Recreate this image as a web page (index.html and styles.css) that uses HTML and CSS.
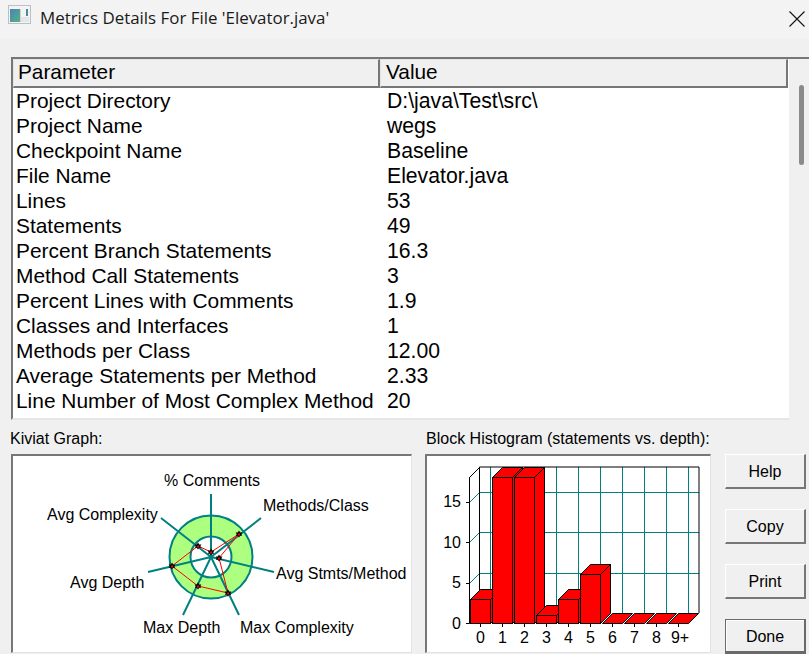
FILE: index.html
```html
<!DOCTYPE html>
<html lang="en">
<head>
<meta charset="utf-8">
<title>Metrics Details</title>
<link rel="stylesheet" href="styles.css">
</head>
<body>
<div class="window">
  <header class="titlebar">
    <svg class="app-icon" width="23" height="19" viewBox="0 0 23 19">
      <defs><linearGradient id="ig" x1="0" y1="0" x2="1" y2="1"><stop offset="0" stop-color="#4a84b8"/><stop offset="1" stop-color="#58b080"/></linearGradient></defs>
      <rect x="0.5" y="0.5" width="22" height="18" fill="#f2f3f4" stroke="#bcc0c4"/>
      <rect x="2" y="4" width="10" height="13" fill="url(#ig)"/>
      <rect x="12" y="4" width="1" height="13" fill="#cfd4d6"/>
      <rect x="18" y="4" width="2" height="7" fill="#4f8a92"/>
      <rect x="13" y="12" width="8" height="5" fill="#e4e6e6"/>
    </svg>
    <span class="title">Metrics Details For File 'Elevator.java'</span>
    <svg class="close" width="16" height="16" viewBox="0 0 16 16"><path d="M0.5 0.5L15.5 15.5M15.5 0.5L0.5 15.5" stroke="#111" stroke-width="1.1" fill="none"/></svg>
  </header>

  <main class="content">
    <section class="table-wrap">
      <div class="list">
        <div class="list-head">
          <div class="head-cell head-param">Parameter</div>
          <div class="head-cell head-value">Value</div>
        </div>
        <div class="rows">
          <div class="row"><span class="param">Project Directory</span><span class="val">D:\java\Test\src\</span></div>
          <div class="row"><span class="param">Project Name</span><span class="val">wegs</span></div>
          <div class="row"><span class="param">Checkpoint Name</span><span class="val">Baseline</span></div>
          <div class="row"><span class="param">File Name</span><span class="val">Elevator.java</span></div>
          <div class="row"><span class="param">Lines</span><span class="val">53</span></div>
          <div class="row"><span class="param">Statements</span><span class="val">49</span></div>
          <div class="row"><span class="param">Percent Branch Statements</span><span class="val">16.3</span></div>
          <div class="row"><span class="param">Method Call Statements</span><span class="val">3</span></div>
          <div class="row"><span class="param">Percent Lines with Comments</span><span class="val">1.9</span></div>
          <div class="row"><span class="param">Classes and Interfaces</span><span class="val">1</span></div>
          <div class="row"><span class="param">Methods per Class</span><span class="val">12.00</span></div>
          <div class="row"><span class="param">Average Statements per Method</span><span class="val">2.33</span></div>
          <div class="row"><span class="param">Line Number of Most Complex Method</span><span class="val">20</span></div>
        </div>
      </div>
      <div class="scrollbar"><div class="thumb"></div></div>
    </section>

    <section class="bottom">
      <div class="chart kiviat">
        <div class="chart-label">Kiviat Graph:</div>
        <div class="panel">
          <svg class="plot" width="398" height="196" viewBox="13 456 398 196">
            <g fill="none" stroke="#008080" stroke-width="2">
              <circle cx="211" cy="557" r="41.5" fill="#adff7f"/>
              <circle cx="211" cy="557" r="20.5" fill="#ffffff"/>
              <path d="M211 557L211 494M211 557L261 518M211 557L274 572M211 557L239 615M211 557L183 615M211 557L148 572M211 557L161 518"/>
            </g>
            <path class="poly" d="M211 552L239 534L219 558L228 593L198 586L172 566L198 546Z"/>
            <g>
              <use href="#star" x="211" y="552"/><use href="#star" x="239" y="534"/><use href="#star" x="219" y="558"/><use href="#star" x="228" y="593"/><use href="#star" x="198" y="586"/><use href="#star" x="172" y="566"/><use href="#star" x="198" y="546"/>
            </g>
            <defs><g id="star"><path d="M0 -3.5L3.2 1.8L-3.2 1.8Z M-3.4 -1.4L3.4 -1.4L0 3.4Z" fill="#000"/><rect x="-1" y="-0.5" width="2" height="2" fill="#f00"/></g></defs>
            <g class="lbl">
              <text x="164" y="486">% Comments</text>
              <text x="263" y="511">Methods/Class</text>
              <text x="47" y="520">Avg Complexity</text>
              <text x="276" y="579">Avg Stmts/Method</text>
              <text x="70" y="588">Avg Depth</text>
              <text x="143" y="633">Max Depth</text>
              <text x="240" y="633">Max Complexity</text>
            </g>
          </svg>
        </div>
      </div>

      <div class="chart hist">
        <div class="chart-label">Block Histogram (statements vs. depth):</div>
        <div class="panel">
          <svg class="plot" width="283" height="196" viewBox="427 456 283 196">
            <g fill="none">
              <path stroke="#008080" d="M490.5 467V613M512.5 467V613M534.5 467V613M556.5 467V613M578.5 467V613M600.5 467V613M622.5 467V613M644.5 467V613M666.5 467V613M688.5 467V613M479.5 492.5H699M479.5 532.5H699M479.5 573.5H699"/>
              <path stroke="#008080" class="diag" d="M469.5 502.5L479.5 492.5M469.5 542.5L479.5 532.5M469.5 583.5L479.5 573.5"/>
              <path stroke="#000" d="M479.5 613V467H699V613M469.5 477V623.5H480M469.5 502.5H466M469.5 542.5H466M469.5 583.5H466M469.5 623.5H466"/>
              <path stroke="#000" class="diag" d="M469.5 477.5L479.5 467.5"/>
              <path stroke="#000" d="M480.5 623V627M502.5 623V627M524.5 623V627M546.5 623V627M568.5 623V627M590.5 623V627M612.5 623V627M634.5 623V627M656.5 623V627M678.5 623V627"/>
            </g>
            <g class="bars">
              <path d="M470.5 599.5l10 -10h20l-10 10zM490.5 599.5l10 -10v24l-10 10z"/><rect x="470.5" y="599.5" width="20" height="24"/>
              <path d="M492.5 477.5l10 -10h20l-10 10zM512.5 477.5l10 -10v146l-10 10z"/><rect x="492.5" y="477.5" width="20" height="146"/>
              <path d="M514.5 477.5l10 -10h20l-10 10zM534.5 477.5l10 -10v146l-10 10z"/><rect x="514.5" y="477.5" width="20" height="146"/>
              <path d="M536.5 615.5l10 -10h20l-10 10zM556.5 615.5l10 -10v8l-10 10z"/><rect x="536.5" y="615.5" width="20" height="8"/>
              <path d="M558.5 599.5l10 -10h20l-10 10zM578.5 599.5l10 -10v24l-10 10z"/><rect x="558.5" y="599.5" width="20" height="24"/>
              <path d="M580.5 574.5l10 -10h20l-10 10zM600.5 574.5l10 -10v49l-10 10z"/><rect x="580.5" y="574.5" width="20" height="49"/>
              <path d="M602.5 623.5l10 -10h20l-10 10z"/>
              <path d="M624.5 623.5l10 -10h20l-10 10z"/>
              <path d="M646.5 623.5l10 -10h20l-10 10z"/>
              <path d="M668.5 623.5l10 -10h20l-10 10z"/>
            </g>
            <g class="lbl axis-y">
              <text x="461" y="507">15</text>
              <text x="461" y="548">10</text>
              <text x="461" y="588">5</text>
              <text x="461" y="629">0</text>
            </g>
            <g class="lbl axis-x">
              <text x="480.5" y="643">0</text><text x="502.5" y="643">1</text><text x="524.5" y="643">2</text><text x="546.5" y="643">3</text><text x="568.5" y="643">4</text><text x="590.5" y="643">5</text><text x="612.5" y="643">6</text><text x="634.5" y="643">7</text><text x="656.5" y="643">8</text><text x="680" y="643">9+</text>
            </g>
          </svg>
        </div>
      </div>

      <div class="buttons">
        <button class="btn" type="button">Help</button>
        <button class="btn" type="button">Copy</button>
        <button class="btn" type="button">Print</button>
        <button class="btn default" type="button">Done</button>
      </div>
    </section>
  </main>
</div>
</body>
</html>
```
FILE: styles.css
```css
* { box-sizing: border-box; }
html, body { margin: 0; padding: 0; }
body {
  width: 809px;
  height: 654px;
  overflow: hidden;
  background: #f0f0f0;
  font-family: "Liberation Sans", Arial, sans-serif;
  color: #000;
}
.window { display: flex; flex-direction: column; height: 654px; }
.titlebar {
  height: 39px;
  flex: none;
  background: #f3f3f3;
  display: flex;
  align-items: center;
  padding: 0 4px 4px 8px;
}
.app-icon { flex: none; align-self: flex-start; margin-top: 5px; }
.title {
  margin-left: 9px;
  font-family: "Open Sans", "Noto Sans", sans-serif;
  font-size: 16.9px;
  color: #1a1a1a;
}
.close { margin-left: auto; margin-top: 3px; }
.content { flex: 1; padding-top: 18px; display: flex; flex-direction: column; }
.table-wrap {
  display: flex;
  height: 363px;
  padding-left: 11px;
}
.list {
  width: 778px;
  background: #fff;
  border: 2px solid #777;
  border-right: none;
  border-bottom: 2px solid #e6e6e6;
  overflow: hidden;
}
.list-head { display: flex; height: 29px; margin-right: 1px; }
.head-cell {
  background: #f0f0f0;
  border-top: 1px solid #e4e4e4;
  border-left: 1px solid #e4e4e4;
  border-right: 2px solid #777;
  border-bottom: 2px solid #777;
  font-size: 20.8px;
  line-height: 24px;
  padding-left: 4px;
}
.head-param { width: 367px; }
.head-value { flex: 1; padding-left: 5px; }
.rows { padding-top: 0; }
.row { display: flex; height: 25px; font-size: 20.9px; line-height: 25px; padding-left: 3px; white-space: nowrap; }
.param { width: 371px; flex: none; }
.val { font-size: 21.2px; }
.scrollbar {
  width: 20px;
  background: #f0f0f0;
  border-top: 2px solid #777;
  padding: 26px 5px 0 10px;
}
.thumb { width: 5px; height: 80px; background: #8a8a8a; border-radius: 2.5px; }
.bottom { display: flex; padding: 10px 0 0 11px; flex: 1; }
.chart { display: flex; flex-direction: column; }
.kiviat { width: 414px; }
.hist { width: 299px; }
.chart-label { height: 24px; font-size: 16px; line-height: 18px; white-space: nowrap; }
.kiviat .chart-label { margin-left: -1px; }
.hist .chart-label { padding-left: 1px; }
.panel {
  background: #fff;
  border-top: 2px solid #777;
  border-left: 2px solid #777;
  border-right: 1px solid #e3e3e3;
  border-bottom: 1px solid #e3e3e3;
  height: 199px;
  overflow: hidden;
}
.kiviat .panel { width: 401px; }
.hist .panel { width: 286px; }
.plot { display: block; }
.lbl text { font-family: "Liberation Sans", Arial, sans-serif; font-size: 16px; fill: #000; }
.axis-y text { text-anchor: end; }
.axis-x text { text-anchor: middle; }
.poly { fill: none; stroke: #f00; stroke-width: 1; }
.diag { shape-rendering: crispEdges; }
.bars path, .bars rect { fill: #f00; stroke: #000; stroke-width: 1; }
.buttons { display: flex; flex-direction: column; gap: 20px; padding: 24px 0 0 1px; }
.btn {
  flex: none;
  width: 81px;
  height: 35px;
  font-family: "Liberation Sans", Arial, sans-serif;
  font-size: 16px;
  color: #000;
  background: #f0f0f0;
  border-style: solid;
  border-color: #fff #777 #777 #fff;
  border-width: 1px 2px 2px 1px;
  padding: 2px 0 0;
}
.btn.default {
  border-color: #6a6a6a;
  border-width: 1px 2px 3px 1px;
  box-shadow: inset 1px 1px 0 #fff;
}
```
